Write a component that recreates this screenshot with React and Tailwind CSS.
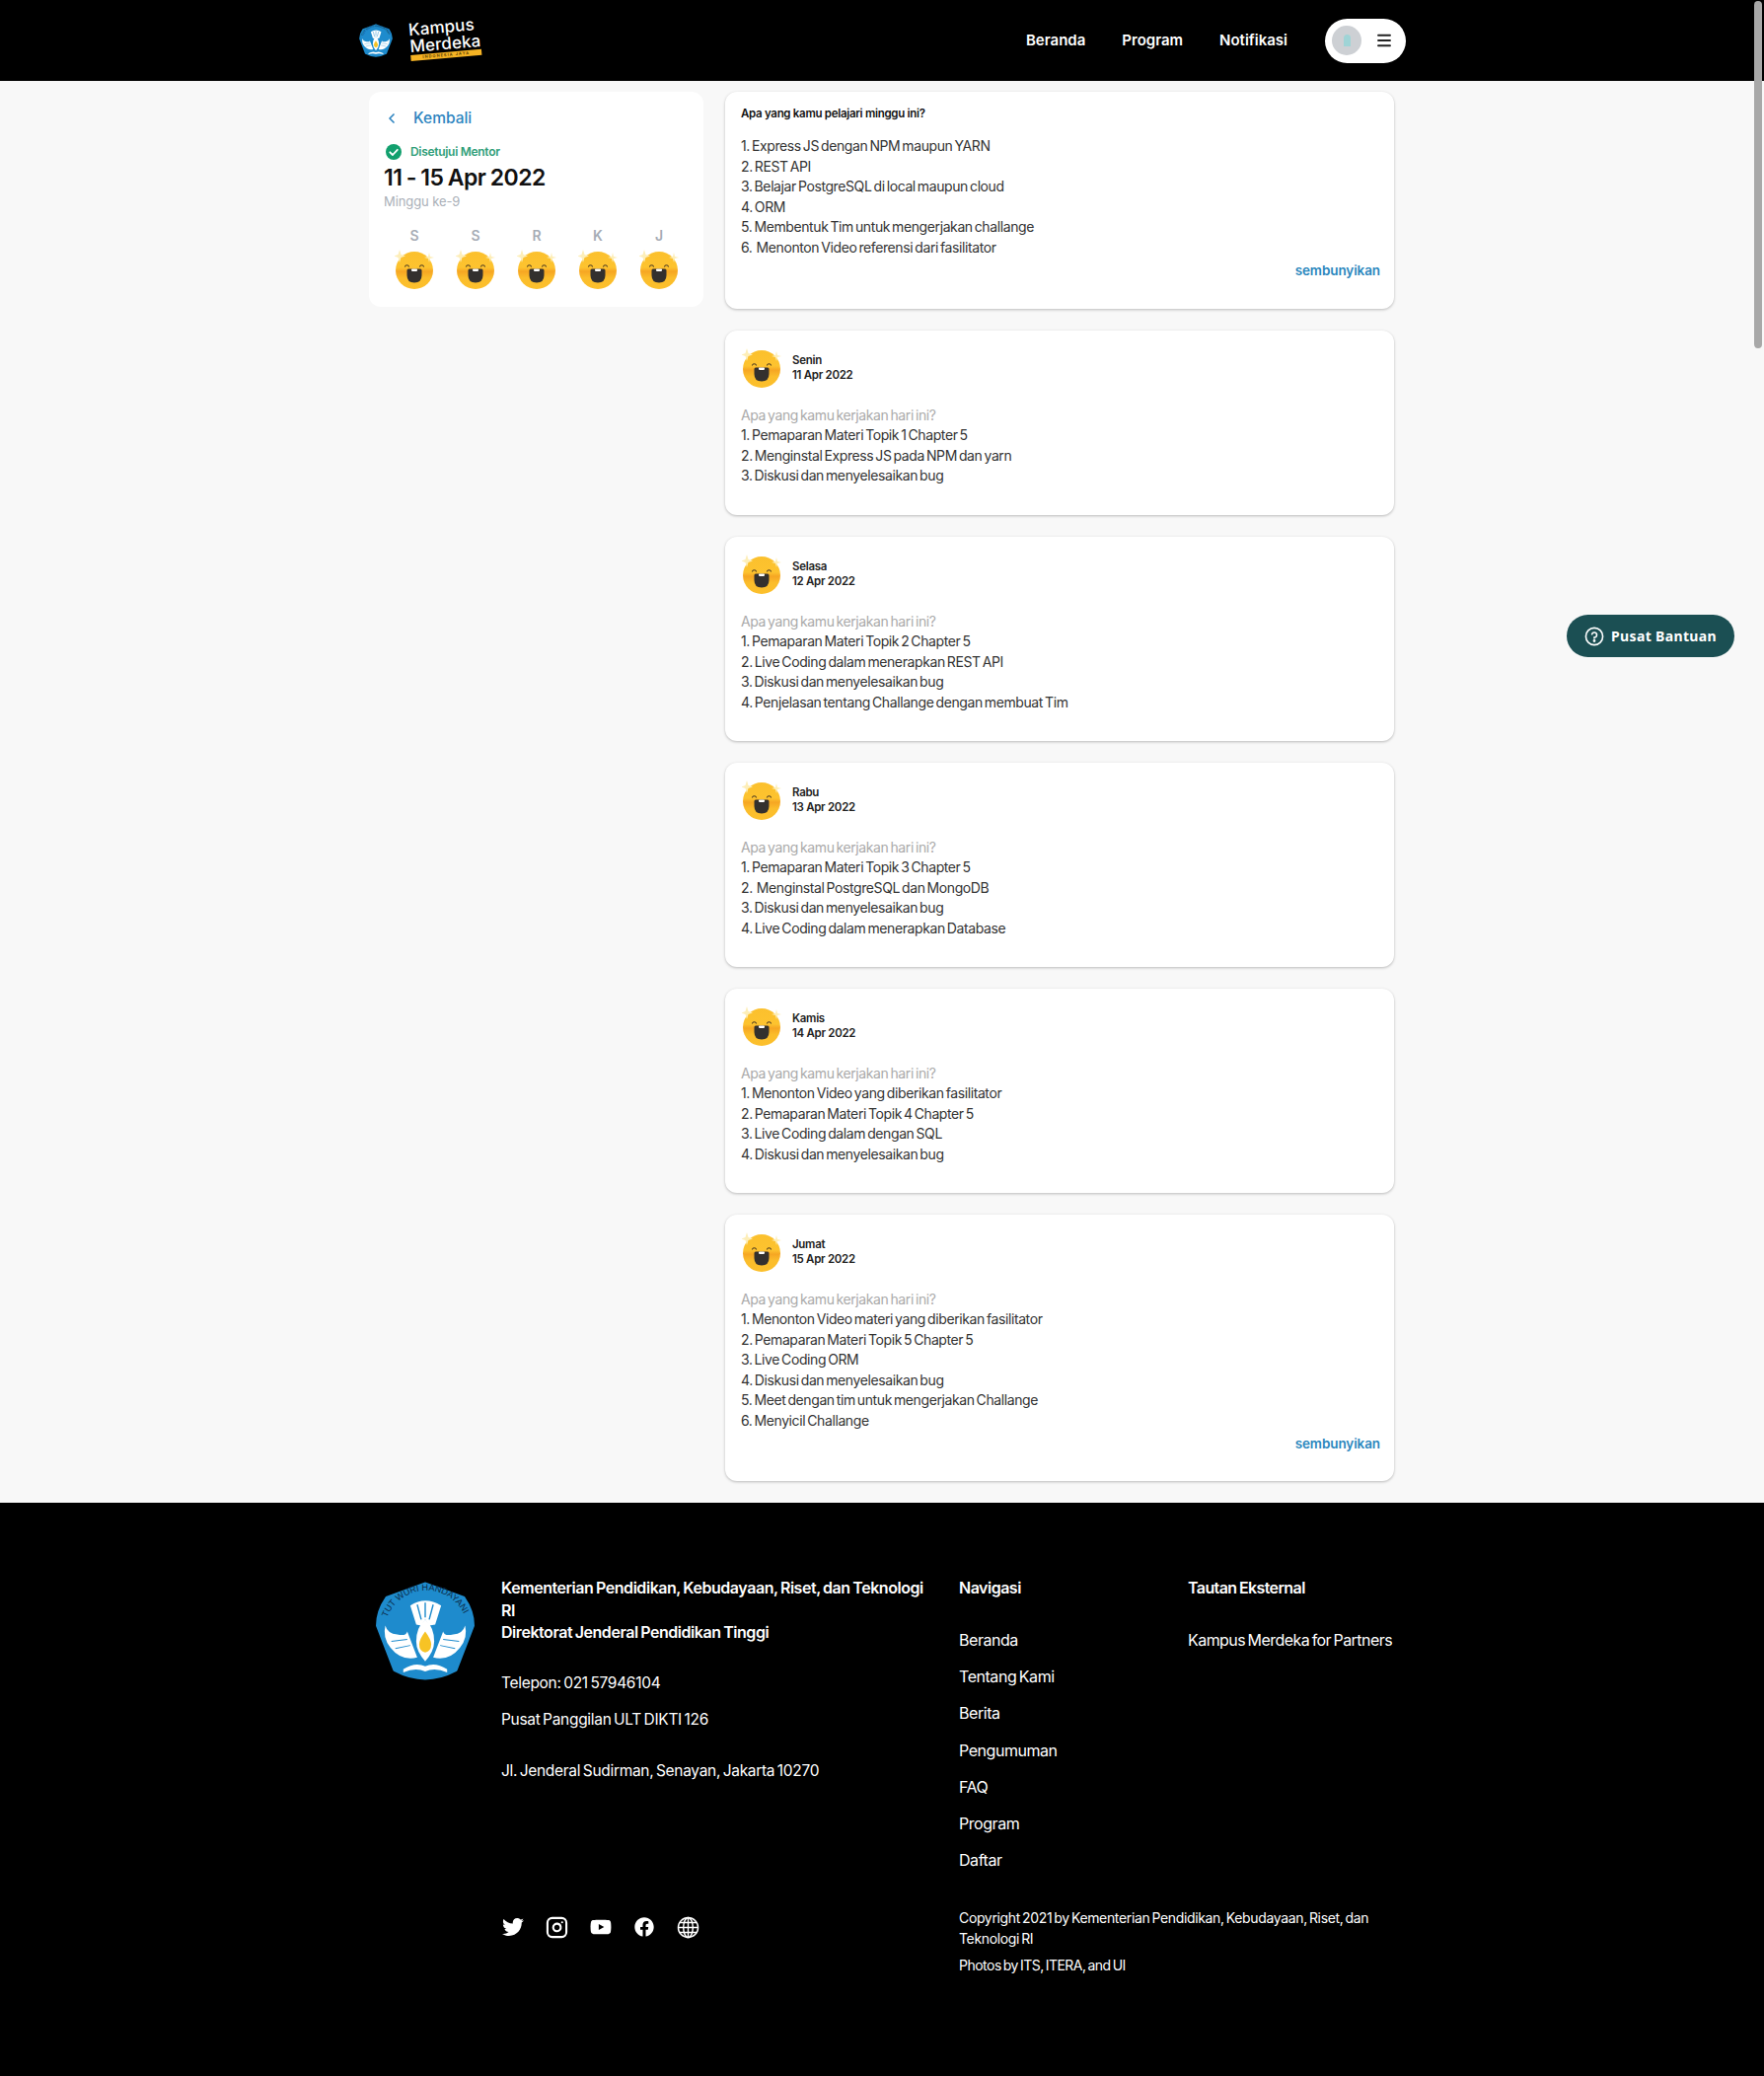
import React from 'react';
import { FaTwitter, FaYoutube, FaFacebook } from 'react-icons/fa';
import { ChevronLeft, Instagram, Menu } from 'lucide-react';

const days = [
  {
    name: 'Senin',
    date: '11 Apr 2022',
    minH: 'h-[187px]',
    items: ['1. Pemaparan Materi Topik 1 Chapter 5', '2. Menginstal Express JS pada NPM dan yarn', '3. Diskusi dan menyelesaikan bug'],
  },
  {
    name: 'Selasa',
    date: '12 Apr 2022',
    minH: 'h-[207px]',
    items: ['1. Pemaparan Materi Topik 2 Chapter 5', '2. Live Coding dalam menerapkan REST API', '3. Diskusi dan menyelesaikan bug', '4. Penjelasan tentang Challange dengan membuat Tim'],
  },
  {
    name: 'Rabu',
    date: '13 Apr 2022',
    minH: 'h-[207px]',
    items: ['1. Pemaparan Materi Topik 3 Chapter 5', '2.  Menginstal PostgreSQL dan MongoDB', '3. Diskusi dan menyelesaikan bug', '4. Live Coding dalam menerapkan Database'],
  },
  {
    name: 'Kamis',
    date: '14 Apr 2022',
    minH: 'h-[207px]',
    items: ['1. Menonton Video yang diberikan fasilitator', '2. Pemaparan Materi Topik 4 Chapter 5', '3. Live Coding dalam dengan SQL', '4. Diskusi dan menyelesaikan bug'],
  },
  {
    name: 'Jumat',
    date: '15 Apr 2022',
    minH: 'h-[270px]',
    hide: true,
    items: ['1. Menonton Video materi yang diberikan fasilitator', '2. Pemaparan Materi Topik 5 Chapter 5', '3. Live Coding ORM', '4. Diskusi dan menyelesaikan bug', '5. Meet dengan tim untuk mengerjakan Challange', '6. Menyicil Challange'],
  },
];

const learned = [
  '1. Express JS dengan NPM maupun YARN',
  '2. REST API',
  '3. Belajar PostgreSQL di local maupun cloud',
  '4. ORM',
  '5. Membentuk Tim untuk mengerjakan challange',
  '6.  Menonton Video referensi dari fasilitator',
];

const navLinks = ['Beranda', 'Tentang Kami', 'Berita', 'Pengumuman', 'FAQ', 'Program', 'Daftar'];

const Emoji = ({ className }) => (
  <svg viewBox="0 0 40 40" className={className}>
    <defs>
      <linearGradient id="face" x1="0" y1="0" x2="0" y2="1">
        <stop offset="0" stopColor="#fbc02d" />
        <stop offset="0.42" stopColor="#fdc32f" />
        <stop offset="0.53" stopColor="#f6a623" />
        <stop offset="0.7" stopColor="#fbbd2b" />
        <stop offset="1" stopColor="#fcc02c" />
      </linearGradient>
    </defs>
    <circle cx="20" cy="21" r="19" fill="url(#face)" />
    <path d="M5 0 L6.5 5 L11 6.5 L6.5 8 L5 13 L3.5 8 L-1 6.5 L3.5 5 Z" fill="#fdeeb8" />
    <path d="M35 3 L36 7 L40 8 L36 9 L35 13 L34 9 L30 8 L34 7 Z" fill="#fdeeb8" />
    <path d="M10.5 17 Q12.5 14.5 14.5 17" fill="none" stroke="#5a4522" strokeWidth="1.2" strokeLinecap="round" />
    <path d="M25.5 17 Q27.5 14.5 29.5 17" fill="none" stroke="#5a4522" strokeWidth="1.2" strokeLinecap="round" />
    <path d="M14 19.5 H26 Q27.5 19.5 27.5 21 V26 Q27.5 33.5 20 33.5 Q12.5 33.5 12.5 26 V21 Q12.5 19.5 14 19.5 Z" fill="#33302e" />
    <rect x="17" y="19.5" width="6" height="2.4" rx="0.8" fill="#fff" />
  </svg>
);

const Emblem = ({ className, id }) => (
  <svg viewBox="0 0 100 102" className={className}>
    <path d="M50 3 L88 17 Q97 30 97 44 L80 88 Q50 104 20 88 L3 44 Q3 30 12 17 Z" fill="#1e8bcd" stroke="#1e8bcd" strokeWidth="5" strokeLinejoin="round" />
    <path id={id} d="M11 38 A 42 42 0 0 1 91 38" fill="none" />
    <text fontSize="9" fill="#0b2c4a" fontFamily="Liberation Sans, sans-serif">
      <textPath href={`#${id}`} startOffset="2%">TUT WURI HANDAYANI</textPath>
    </text>
    <path d="M35 24 Q50 14 66 24 L60 43 L54 44 L50 38 L46 44 L41 43 Z" fill="#fff" />
    <path d="M42 23 L46 38 M50 21 V36 M58 23 L54 38" stroke="#1e8bcd" strokeWidth="1.4" />
    <path d="M10 44 Q12 52 22 53 Q31 55 32 50 L42 76 Q26 80 15 66 Q7 56 10 44 Z" fill="#fff" />
    <path d="M90 44 Q88 52 78 53 Q69 55 68 50 L58 76 Q74 80 85 66 Q93 56 90 44 Z" fill="#fff" />
    <path d="M16 60 L32 58 M20 67 L35 64 M68 58 L84 60 M65 64 L80 67" stroke="#1e8bcd" strokeWidth="1" />
    <path d="M50 38 Q59 46 59 60 Q59 70 50 80 Q41 70 41 60 Q41 46 50 38 Z" fill="#fff" />
    <path d="M50 50 Q56 58 56 63 Q56 70 50 71 Q44 70 44 63 Q44 58 50 50 Z" fill="#f7c325" />
    <path d="M28 88 Q40 80 50 85 Q60 80 72 88 L72 91 Q60 86 50 90 Q40 86 28 91 Z" fill="#fff" />
  </svg>
);

const Globe = ({ className }) => (
  <svg viewBox="0 0 24 24" fill="none" stroke="currentColor" strokeWidth="1.5" className={className}>
    <circle cx="12" cy="12" r="10.5" />
    <ellipse cx="12" cy="12" rx="5" ry="10.5" />
    <path d="M12 1.5 V22.5 M1.5 12 H22.5 M3 6.8 H21 M3 17.2 H21" />
  </svg>
);

const Check = () => (
  <svg viewBox="0 0 16 16" className="w-4 h-4 shrink-0">
    <circle cx="8" cy="8" r="8" fill="#12a06e" />
    <path d="M4.3 8.3 L7 11 L11.8 5.8" fill="none" stroke="#fff" strokeWidth="1.8" strokeLinecap="round" strokeLinejoin="round" />
  </svg>
);

const DayCard = ({ day }) => (
  <div className={`bg-white rounded-xl shadow-[0_1px_3px_rgba(0,0,0,0.25)] pl-[16px] pr-[14px] pt-[18px] ${day.minH}`}>
    <div className="flex items-center gap-[11px] pl-[1px] h-[40px]">
      <Emoji className="w-[40px] h-[40px]" />
      <div className="text-[11.5px] leading-[15px] font-semibold tracking-[-0.3px] text-[#222]">
        <div>{day.name}</div>
        <div>{day.date}</div>
      </div>
    </div>
    <div className="mt-[17.5px] text-[14px] leading-[20.5px] tracking-[-0.4px] [word-spacing:-1.5px] text-[#333] whitespace-pre">
      <div className="text-[#aaa]">Apa yang kamu kerjakan hari ini?</div>
      {day.items.map((item) => (
        <div key={item}>{item}</div>
      ))}
    </div>
    {day.hide && <div className="mt-[3px] text-right text-[13.5px] font-semibold tracking-[-0.1px] text-[#2a86bd]">sembunyikan</div>}
  </div>
);

export default function App() {
  return (
    <div className="relative w-full min-h-[2104px] bg-[#f8f8f8] font-['Inter','Liberation_Sans',sans-serif]">
      <header className="h-[82px] bg-black">
        <div className="w-[1060px] ml-[364px] h-full flex items-center justify-between">
          <div className="flex items-center gap-[17px]">
            <Emblem id="arcTop" className="w-[34px] h-[35px]" />
            <div className="w-[72px] h-[44px] -rotate-[5deg] text-white font-medium text-[17px] leading-[17px] tracking-[0.1px]">
              <div>Kampus</div>
              <div>Merdeka</div>
              <div className="bg-[#f5b324] text-[#5a3c00] text-[4px] leading-[6px] tracking-[1px] text-center font-bold">INDONESIA JAYA</div>
            </div>
          </div>
          <div className="flex items-center mr-[-1px]">
            <nav className="flex gap-[37px] text-white text-[15px] font-semibold">
              <a>Beranda</a>
              <a>Program</a>
              <a>Notifikasi</a>
            </nav>
            <div className="ml-[38px] w-[82px] h-[45px] bg-white rounded-full flex items-center pl-[7px] gap-[14px]">
              <div className="w-[30px] h-[30px] rounded-full bg-[#cdd0d4] flex items-center justify-center">
                <div className="w-[7px] h-[12px] rounded-t-full bg-[#9fd4d6]" />
              </div>
              <Menu className="w-[18px] h-[18px] text-[#222]" strokeWidth={2.5} />
            </div>
          </div>
        </div>
      </header>

      <main className="flex gap-[22px] ml-[374px] w-[1039px] pt-[11px] h-[1441px]">
        <aside className="w-[339px] h-[218px] bg-white rounded-xl px-[15px] pt-[15px] shrink-0">
          <div className="flex items-center gap-[14px] h-[23px] text-[#2d84c0] text-[15.5px] font-medium">
            <ChevronLeft className="w-[16px] h-[16px]" strokeWidth={2.5} />
            <span>Kembali</span>
          </div>
          <div className="flex items-center gap-[9px] mt-[15px] pl-[2px] h-[16px] text-[12px] font-semibold tracking-[-0.3px] text-[#2f9e78]">
            <Check />
            <span>Disetujui Mentor</span>
          </div>
          <h1 className="mt-[3px] text-[23px] leading-[30px] font-semibold tracking-[-0.5px] [word-spacing:-1px] text-[#111]">11 - 15 Apr 2022</h1>
          <div className="text-[13px] leading-[18px] tracking-[-0.1px] text-[#aab0b8]">Minggu ke-9</div>
          <div className="grid grid-cols-5 mt-[18px] w-[310px]">
            {['S', 'S', 'R', 'K', 'J'].map((d, i) => (
              <div key={i} className="flex flex-col items-center">
                <span className="text-[14px] leading-[16px] font-semibold text-[#a6acb5]">{d}</span>
                <Emoji className="w-[40px] h-[40px] mt-[6px]" />
              </div>
            ))}
          </div>
        </aside>

        <section className="flex-1 flex flex-col gap-[22px]">
          <div className="bg-white rounded-xl shadow-[0_1px_3px_rgba(0,0,0,0.25)] pl-[16px] pr-[14px] pt-[15px] h-[220px]">
            <div className="text-[11.5px] leading-[15px] font-semibold tracking-[-0.3px] text-[#111]">Apa yang kamu pelajari minggu ini?</div>
            <div className="mt-[15px] text-[14px] leading-[20.5px] tracking-[-0.4px] [word-spacing:-1.5px] text-[#333] whitespace-pre">
              {learned.map((item) => (
                <div key={item}>{item}</div>
              ))}
            </div>
            <div className="mt-[3px] text-right text-[13.5px] font-semibold tracking-[-0.1px] text-[#2a86bd]">sembunyikan</div>
          </div>
          {days.map((day) => (
            <DayCard key={day.name} day={day} />
          ))}
        </section>
      </main>

      <footer className="bg-black h-[581px] pt-[75px] text-white">
        <div className="ml-[380px] w-[1040px]">
          <div className="flex h-[336px]">
            <Emblem id="arcFoot" className="w-[102px] h-[103px] mt-[5px] shrink-0" />
            <div className="ml-[26px] w-[464px] shrink-0">
              <div className="w-[436px] text-[16px] leading-[22.5px] font-semibold tracking-[-0.45px] [word-spacing:-1px]">
                Kementerian Pendidikan, Kebudayaan, Riset, dan Teknologi RI
                <br />
                Direktorat Jenderal Pendidikan Tinggi
              </div>
              <div className="mt-[29px] text-[15.5px] leading-[22px] tracking-[-0.3px] [word-spacing:-1.5px]">Telepon: 021 57946104</div>
              <div className="mt-[15px] text-[15.5px] leading-[22px] tracking-[-0.3px] [word-spacing:-1.5px]">Pusat Panggilan ULT DIKTI 126</div>
              <div className="mt-[30px] text-[15.5px] leading-[22px] tracking-[-0.3px] [word-spacing:-1.5px]">Jl. Jenderal Sudirman, Senayan, Jakarta 10270</div>
            </div>
            <div className="w-[232px] shrink-0">
              <div className="text-[16px] leading-[22px] font-semibold tracking-[-0.5px]">Navigasi</div>
              <div className="mt-[31px] flex flex-col gap-[15.2px] text-[16px] leading-[22px] tracking-[-0.45px] [word-spacing:-1.5px]">
                {navLinks.map((l) => (
                  <a key={l}>{l}</a>
                ))}
              </div>
            </div>
            <div>
              <div className="text-[16px] leading-[22px] font-semibold tracking-[-0.6px] [word-spacing:-1px]">Tautan Eksternal</div>
              <div className="mt-[31px] text-[16px] leading-[22px] tracking-[-0.55px] [word-spacing:-1.5px] whitespace-nowrap">Kampus Merdeka for Partners</div>
            </div>
          </div>
          <div className="flex">
            <div className="ml-[129px] w-[463px] shrink-0 flex items-center gap-[22px] h-[38px]">
              <FaTwitter className="w-[22px] h-[22px]" />
              <Instagram className="w-[23px] h-[23px]" strokeWidth={2.2} />
              <FaYoutube className="w-[22px] h-[22px]" />
              <FaFacebook className="w-[20px] h-[20px] mx-[1px]" />
              <Globe className="w-[23px] h-[23px]" />
            </div>
            <div className="w-[430px] text-[14px] leading-[20.5px] tracking-[-0.35px] [word-spacing:-1.5px]">
              <div>Copyright 2021 by Kementerian Pendidikan, Kebudayaan, Riset, dan Teknologi RI</div>
              <div className="mt-[7px] tracking-[-0.5px]">Photos by ITS, ITERA, and UI</div>
            </div>
          </div>
        </div>
      </footer>

      <button className="absolute left-[1588px] top-[623px] w-[170px] h-[43px] rounded-full bg-[#1b4f53] text-white flex items-center justify-center gap-[7px] font-['Noto_Sans',sans-serif] text-[14px] font-bold tracking-[0.35px]">
        <svg viewBox="0 0 20 20" className="w-[20px] h-[20px]" fill="none" stroke="currentColor" strokeWidth="1.6">
          <circle cx="10" cy="10" r="8.6" />
          <path d="M7.6 7.8 A2.5 2.5 0 1 1 10 11 V12" strokeLinecap="round" />
          <circle cx="10" cy="14.5" r="0.6" fill="currentColor" />
        </svg>
        Pusat Bantuan
      </button>

      <div className="absolute right-[2px] top-[1px] w-[8px] h-[352px] rounded-full bg-[#a8a8a8]" />
    </div>
  );
}
